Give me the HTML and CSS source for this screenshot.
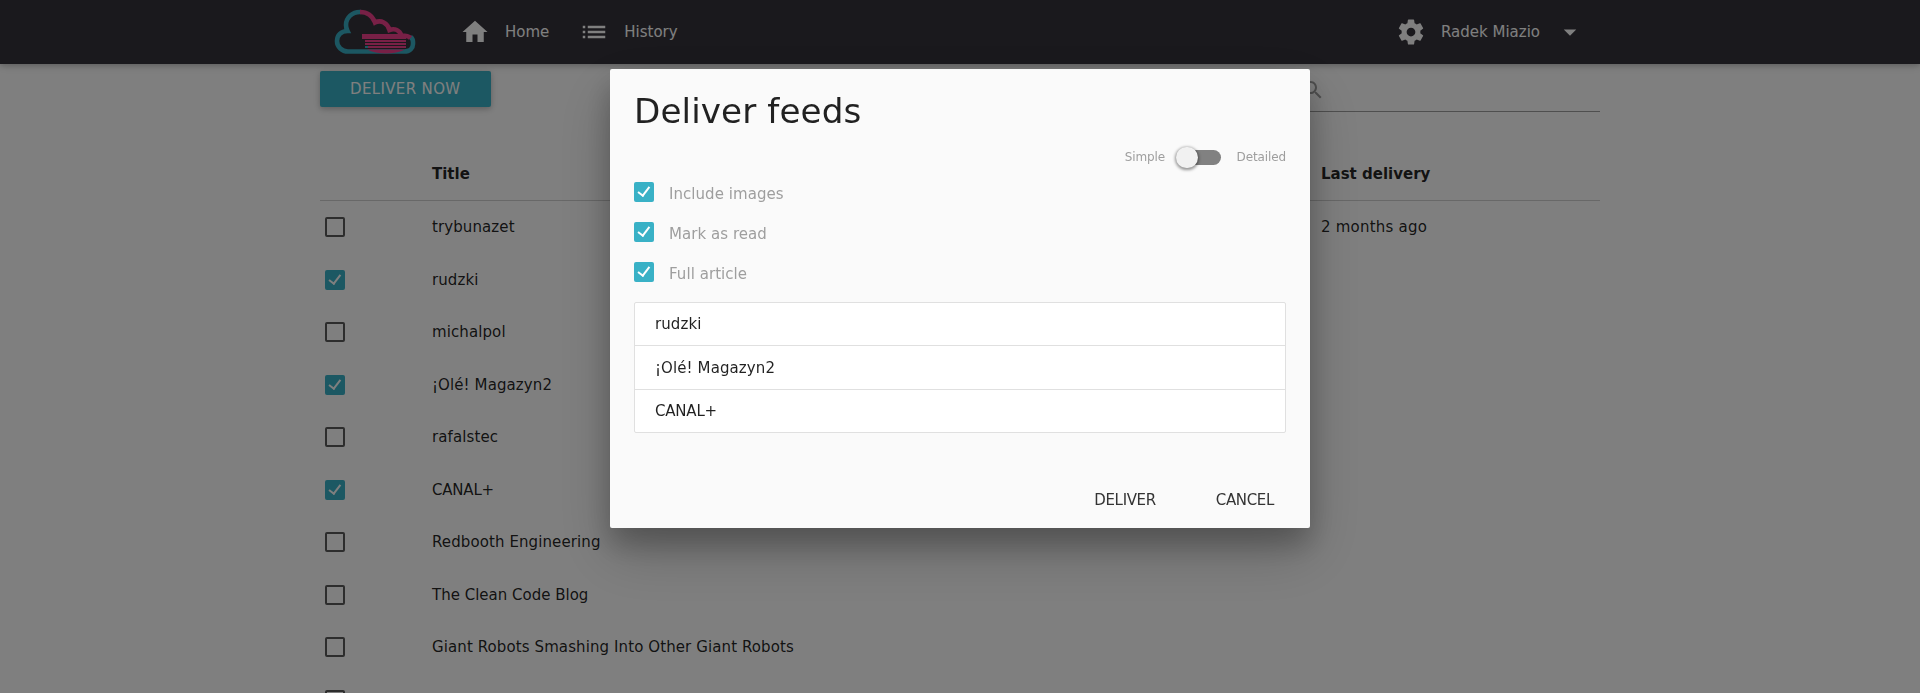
FILE: index.html
```html
<!DOCTYPE html>
<html lang="en">
<head>
<meta charset="utf-8">
<title>Deliver feeds</title>
<link rel="stylesheet" href="styles.css">
</head>
<body>
<header class="navbar">
  <div class="container nav-inner">
    <svg class="logo" viewBox="0 0 110 64" fill="none">
      <g stroke="#39aec4" stroke-width="4.6">
        <path d="M41 12C32 11.500 26 18 26 25C26 27.500 26.500 29 27.500 31C21 31 17 35.500 17 41C17 47 22 51.500 28 51.500H84C90 51.500 93 48 93 44V42C93 39.500 92 38 90.500 37"/>
      </g>
      <g stroke="#f0408c" stroke-width="4.6">
        <path d="M40 12C47 12 52.500 16 55 22.500C61 19.500 67.500 23 69.500 30C75 28 79.500 30.500 81.500 35.500C85 35.500 88 35.500 90.500 38"/>
      </g>
      <path fill="#f0408c" d="M42 34H86V39H42zM45 40h41v2H45zM45 43h41v2H45zM48 46h38v2H48zM47 49.500H85C80 52 73 53.500 66 53.500S52 52 47 49.500z"/>
      <path fill="#39aec4" d="M45 46h3v2h-3z"/>
    </svg>
    <nav class="links">
      <a class="nav-item"><svg class="nav-icon" viewBox="0 0 24 24"><path d="M10 20v-6h4v6h5v-8h3L12 3 2 12h3v8z"/></svg>Home</a>
      <a class="nav-item"><svg class="nav-icon" viewBox="0 0 24 24"><path d="M3 13h2v-2H3v2zm0 4h2v-2H3v2zm0-8h2V7H3v2zm4 4h14v-2H7v2zm0 4h14v-2H7v2zM7 7v2h14V7H7z"/></svg>History</a>
    </nav>
    <a class="nav-item user"><svg class="nav-icon" viewBox="0 0 24 24"><path d="M19.430 12.980c.04-.32.07-.64.07-.98s-.03-.66-.07-.98l2.110-1.650c.19-.15.24-.42.12-.64l-2-3.460c-.12-.22-.39-.3-.61-.22l-2.490 1c-.52-.4-1.080-.73-1.690-.98l-.38-2.650C14.460 2.180 14.250 2 14 2h-4c-.25 0-.46.18-.49.42l-.38 2.650c-.61.25-1.170.59-1.690.98l-2.490-1c-.23-.09-.49 0-.61.22l-2 3.460c-.13.22-.07.49.12.64l2.110 1.650c-.04.32-.07.65-.07.98s.03.66.07.98l-2.110 1.650c-.19.15-.24.42-.12.64l2 3.460c.12.22.39.3.61.22l2.490-1c.52.4 1.080.73 1.690.98l.38 2.650c.03.24.24.42.49.42h4c.25 0 .46-.18.49-.42l.38-2.650c.61-.25 1.170-.59 1.690-.98l2.490 1c.23.09.49 0 .61-.22l2-3.460c.12-.22.07-.49-.12-.64l-2.110-1.650zM12 15.500c-1.930 0-3.500-1.570-3.500-3.500s1.570-3.500 3.500-3.500 3.500 1.570 3.500 3.500-1.570 3.500-3.500 3.500z"/></svg>Radek Miazio<svg class="nav-icon caret" viewBox="0 0 24 24"><path d="M7 10l5 5 5-5z"/></svg></a>
  </div>
</header>

<main class="container page">
  <div class="toolbar">
    <button class="btn">DELIVER NOW</button>
    <div class="search"><svg class="search-icon" viewBox="0 0 24 24"><path d="M15.500 14h-.79l-.28-.27C15.410 12.590 16 11.110 16 9.500 16 5.910 13.090 3 9.500 3S3 5.910 3 9.500 5.910 16 9.500 16c1.610 0 3.090-.59 4.230-1.570l.27.28v.79l5 4.990L20.490 19l-4.990-5zm-6 0C7.010 14 5 11.990 5 9.500S7.010 5 9.500 5 14 7.010 14 9.500 11.990 14 9.500 14z"/></svg></div>
  </div>
  <div class="feeds">
    <div class="row head"><span></span><span>Title</span><span>Last delivery</span></div>
    <div class="row"><span class="box"></span><span>trybunazet</span><span class="age">2 months ago</span></div>
    <div class="row"><span class="box checked"></span><span>rudzki</span><span></span></div>
    <div class="row"><span class="box"></span><span>michalpol</span><span></span></div>
    <div class="row"><span class="box checked"></span><span>¡Olé! Magazyn2</span><span></span></div>
    <div class="row"><span class="box"></span><span>rafalstec</span><span></span></div>
    <div class="row"><span class="box checked"></span><span class="caps">CANAL+</span><span></span></div>
    <div class="row"><span class="box"></span><span>Redbooth Engineering</span><span></span></div>
    <div class="row"><span class="box"></span><span class="tight">The Clean Code Blog</span><span></span></div>
    <div class="row"><span class="box"></span><span>Giant Robots Smashing Into Other Giant Robots</span><span></span></div>
    <div class="row"><span class="box"></span><span></span><span></span></div>
  </div>
</main>

<div class="overlay">
  <section class="modal">
    <div class="modal-content">
      <h4>Deliver feeds</h4>
      <div class="switch">Simple<span class="lever"></span>Detailed</div>
      <div class="options">
        <label class="option"><span class="box checked"></span><span class="option-text">Include images</span></label>
        <label class="option"><span class="box checked"></span><span class="option-text">Mark as read</span></label>
        <label class="option"><span class="box checked"></span><span class="option-text">Full article</span></label>
      </div>
      <ul class="collection"><li>rudzki</li><li>¡Olé! Magazyn2</li><li class="caps">CANAL+</li></ul>
    </div>
    <div class="modal-footer"><button class="btn-flat">DELIVER</button><button class="btn-flat">CANCEL</button></div>
  </section>
</div>
</body>
</html>
```
FILE: styles.css
```css
*, *::before, *::after { box-sizing: border-box; }
html { font: 15px/1.5 "DejaVu Sans", sans-serif; color: rgba(0, 0, 0, .87); }
body { margin: 0; height: 693px; overflow: hidden; background: #fff; }
.container { width: 1280px; margin: 0 auto; }

.navbar { position: relative; height: 64px; background: #34323a; color: #fff; box-shadow: 0 2px 5px rgba(0,0,0,.16), 0 2px 10px rgba(0,0,0,.12); }
.nav-inner { display: flex; align-items: center; height: 64px; }
.logo { width: 110px; height: 64px; margin-right: 15px; }
.links { display: flex; }
.nav-item { display: flex; align-items: center; height: 64px; padding: 0 15px; }
.nav-icon { width: 30px; height: 30px; margin-right: 15px; fill: currentColor; }
.user { margin-left: auto; }
.caret { margin: 0 0 0 15px; }

.toolbar { display: flex; justify-content: space-between; padding-top: 7px; height: 83px; }
.btn { height: 36px; padding: 0 30px; border: 0; border-radius: 2px; background: #39b1c6; color: #fff; font: inherit; letter-spacing: .36px; box-shadow: 0 2px 5px rgba(0,0,0,.16), 0 2px 10px rgba(0,0,0,.12); }
.search { width: 300px; height: 41px; border-bottom: 1px solid #9e9e9e; padding-top: 7px; }
.search-icon { width: 24px; height: 24px; display: block; margin-left: 1px; fill: #9e9e9e; }

.row { display: grid; grid-template-columns: 107px 889px 1fr; align-items: center; height: 52.5px; letter-spacing: .1px; }
.row > span { margin-left: 5px; }
.row .age { letter-spacing: .22px; }
.row .tight { letter-spacing: 0; }
.head { height: 54px; padding-top: 1px; font-weight: bold; letter-spacing: 0; border-bottom: 1px solid #d0d0d0; }

.box { position: relative; display: block; flex: none; width: 20px; height: 20px; border: 2px solid #5a5a5a; border-radius: 2px; }
.checked { border-color: #39b1c6; background: #39b1c6; }
.checked::after { content: ""; position: absolute; left: 0; top: 1px; width: 7px; height: 12px; border: solid #fff; border-width: 0 2px 2px 0; transform: rotate(37deg); transform-origin: 100% 100%; }

.overlay { position: fixed; inset: 0; padding-top: 69.3px; background: rgba(0,0,0,.5); }
.modal { width: 700px; height: 458.7px; margin: 0 auto; display: flex; flex-direction: column; justify-content: space-between; background: #fafafa; border-radius: 2px; box-shadow: 0 16px 28px rgba(0,0,0,.22), 0 25px 55px rgba(0,0,0,.21); }
.modal-content { padding: 24px 24px 0; }
h4 { margin: 0 0 14px; font-size: 34.2px; font-weight: 400; line-height: 37.6px; letter-spacing: .1px; }
.switch { display: flex; justify-content: flex-end; align-items: center; height: 24px; font-size: 12px; letter-spacing: -.12px; color: #9e9e9e; }
.lever { position: relative; width: 40px; height: 15px; margin: 1px 15.5px 0 16px; border-radius: 15px; background: #818181; }
.lever::after { content: ""; position: absolute; left: -5px; top: -3px; width: 21.5px; height: 21.5px; border-radius: 50%; background: #f1f1f1; box-shadow: 0 1px 3px 1px rgba(0,0,0,.4); }
.options { display: grid; grid-auto-rows: 40px; padding-top: 13px; letter-spacing: .05px; color: #9e9e9e; }
.option { display: flex; gap: 15px; }
.option-text { line-height: 25px; }
.collection { list-style: none; margin: 0; padding: 0; border: 1px solid #e0e0e0; border-radius: 2px; overflow: hidden; background: #fff; letter-spacing: .1px; }
.collection li { padding: 10px 20px; border-bottom: 1px solid #e0e0e0; }
.collection li:nth-child(2) { padding: 10.5px 20px 9.5px; }
.collection li:last-child { border-bottom: 0; }
.row .caps, .collection .caps { letter-spacing: -.2px; }
.modal-footer { display: flex; justify-content: flex-end; height: 56px; padding: 10px 6px; }
.btn-flat { height: 36px; padding: 0 30px; border: 0; background: none; color: #343434; font: inherit; letter-spacing: -.35px; }
```
